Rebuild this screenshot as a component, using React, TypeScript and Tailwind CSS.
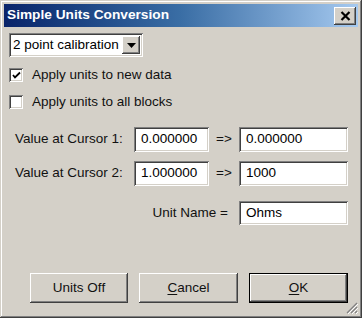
import React from "react";

const font = { fontFamily: '"Liberation Sans", Arial, sans-serif' };

const sunken =
  "bg-white shadow-[inset_1px_1px_#808080,inset_-1px_-1px_#ffffff,inset_2px_2px_#404040,inset_-2px_-2px_#d4d0c8]";
const raised =
  "bg-[#d4d0c8] shadow-[inset_-1px_-1px_#404040,inset_1px_1px_#ffffff,inset_-2px_-2px_#808080,inset_2px_2px_#d4d0c8]";

function Check({ checked }: { checked?: boolean }) {
  return (
    <div className={`w-[14px] h-[14px] ${sunken} flex items-center justify-center`}>
      {checked && (
        <svg width="9" height="9" viewBox="0 0 9 9">
          <path d="M1 4 L3 6.5 L8 1.5" stroke="#000" strokeWidth="1.8" fill="none" />
        </svg>
      )}
    </div>
  );
}

function Field({ value, w, h = 25 }: { value: string; w: string; h?: number }) {
  return (
    <div
      className={`${sunken} ${w} flex items-center pl-[7px] text-[13.5px] text-black whitespace-nowrap`}
      style={{ height: h }}
    >
      {value}
    </div>
  );
}

export default function App() {
  return (
    <div
      className="w-[362px] h-[318px] bg-[#d4d0c8] p-[4px] flex flex-col relative shadow-[inset_-1px_-1px_#404040,inset_1px_1px_#d4d0c8,inset_-2px_-2px_#808080,inset_2px_2px_#ffffff] text-[#111] text-[13.5px]"
      style={font}
    >
      <div className="h-[23px] bg-gradient-to-r from-[#0a246a] via-[#3a6ea5] to-[#a6caf0] flex items-center pl-[3px] pr-[2px]">
        <span className="text-white font-bold text-[13.7px] whitespace-nowrap">Simple Units Conversion</span>
        <div className={`ml-auto w-[22px] h-[18px] ${raised} flex items-center justify-center`}>
          <svg width="11" height="10" viewBox="0 0 11 10">
            <path d="M1.5 1 L9.5 9 M9.5 1 L1.5 9" stroke="#000" strokeWidth="2.2" />
          </svg>
        </div>
      </div>

      <div className="flex-1 flex flex-col">
        <div className={`ml-[5px] mt-[6px] w-[134px] h-[24px] ${sunken} flex items-center pl-[4px] pr-[3px]`}>
          <span className="text-black whitespace-nowrap">2 point calibration</span>
          <div className={`ml-auto w-[18px] h-[18px] ${raised} flex items-center justify-center`}>
            <svg width="9" height="5" viewBox="0 0 9 5">
              <path d="M0 0 L9 0 L4.5 5 Z" fill="#000" />
            </svg>
          </div>
        </div>

        <div className="mt-[11px] ml-[5px] flex items-center h-[14px]">
          <Check checked />
          <span className="ml-[9px] whitespace-nowrap">Apply units to new data</span>
        </div>
        <div className="mt-[13px] ml-[5px] flex items-center h-[14px]">
          <Check />
          <span className="ml-[9px] whitespace-nowrap">Apply units to all blocks</span>
        </div>

        <div className="mt-[18px] pl-[11px] flex items-center">
          <span className="w-[119px] whitespace-nowrap">Value at Cursor 1:</span>
          <Field value="0.000000" w="w-[75px]" />
          <span className="w-[30px] text-center">=&gt;</span>
          <Field value="0.000000" w="w-[109px]" />
        </div>
        <div className="mt-[9px] pl-[11px] flex items-center">
          <span className="w-[119px] whitespace-nowrap">Value at Cursor 2:</span>
          <Field value="1.000000" w="w-[75px]" />
          <span className="w-[30px] text-center">=&gt;</span>
          <Field value="1000" w="w-[109px]" />
        </div>

        <div className="mt-[15px] flex items-center justify-end pr-[10px]">
          <span className="mr-[11px] whitespace-nowrap">Unit Name =</span>
          <Field value="Ohms" w="w-[109px]" h={24} />
        </div>

        <div className="mt-auto mb-[11px] pl-[26px] flex gap-[11px]">
          <div className={`w-[98px] h-[30px] ${raised} flex items-center justify-center`}>
            Units Off
          </div>
          <div className={`w-[99px] h-[30px] ${raised} flex items-center justify-center`}>
            <span>
              <span className="underline underline-offset-2">C</span>ancel
            </span>
          </div>
          <div className="w-[99px] h-[30px] border border-black">
            <div className={`w-full h-full ${raised} flex items-center justify-center`}>
              <span>
                <span className="underline underline-offset-2">O</span>K
              </span>
            </div>
          </div>
        </div>
      </div>

      <svg className="absolute right-[4px] bottom-[4px]" width="12" height="12" viewBox="0 0 12 12">
        <path d="M11 1 L1 11 M11 5 L5 11 M11 9 L9 11" stroke="#808080" strokeWidth="1.2" />
        <path d="M12 2 L2 12 M12 6 L6 12 M12 10 L10 12" stroke="#ffffff" strokeWidth="1" />
      </svg>
    </div>
  );
}
